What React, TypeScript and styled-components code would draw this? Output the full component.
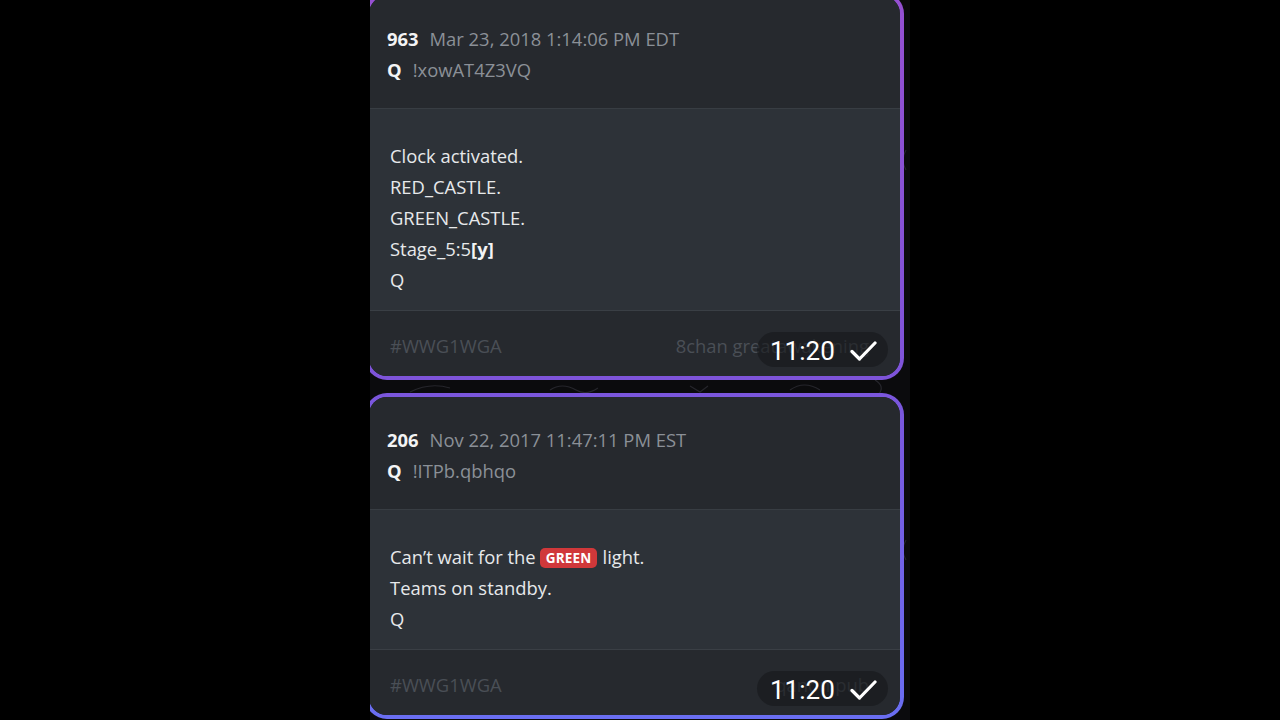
import React from "react";
import styled, { createGlobalStyle } from "styled-components";

const Global = createGlobalStyle`
  html, body { margin: 0; padding: 0; background: #000; }
  body { width: 1280px; height: 720px; overflow: hidden; font-family: "Open Sans", "Noto Sans", sans-serif; }
`;

const Stage = styled.div`
  display: flex;
  width: 1280px;
  height: 720px;
  padding-left: 370px;
  box-sizing: border-box;
  background: #000;
`;

const Column = styled.div`
  position: relative;
  width: 540px;
  height: 720px;
  overflow: hidden;
  background: #0b0b0d;
  display: flex;
  flex-direction: column;
  gap: 13px;
`;

const Doodles = styled.svg`
  position: absolute;
  inset: 0;
  pointer-events: none;
`;

const CardFrame = styled.div<{ $from: string; $to: string; $top?: number }>`
  position: relative;
  margin-left: -5px;
  margin-top: ${(p) => p.$top ?? 0}px;
  width: 539px;
  padding: 4px;
  box-sizing: border-box;
  border-radius: 22px;
  background: linear-gradient(180deg, ${(p) => p.$from}, ${(p) => p.$to});
  flex-shrink: 0;
`;

const CardInner = styled.div`
  position: relative;
  border-radius: 18px;
  overflow: hidden;
  background: #26292e;
`;

const Header = styled.div`
  height: 113px;
  box-sizing: border-box;
  padding: 27px 0 0 18px;
  border-bottom: 1px solid #383d43;
  background: #26292e;
`;

const HeadLine = styled.div`
  display: flex;
  align-items: baseline;
  gap: 11px;
  font-size: 18.4px;
  line-height: 31px;
`;

const Strong = styled.span`
  font-weight: 700;
  color: #f3f4f5;
`;

const Muted = styled.span`
  color: #8b9097;
`;

const Body = styled.div`
  padding: 31px 21px 15px 21px;
  background: #2d3238;
  border-bottom: 1px solid #3a3f45;
`;

const Line = styled.div`
  font-size: 18.4px;
  line-height: 31px;
  height: 31px;
  color: #e7e9eb;
  white-space: nowrap;
`;

const Bold = styled.b`
  font-weight: 700;
  color: #f3f4f5;
`;

const Tag = styled.span`
  display: inline-block;
  background: #d0383a;
  color: #fff;
  font-weight: 700;
  font-size: 13.5px;
  line-height: 20px;
  padding: 0 6px;
  border-radius: 5px;
  margin: 0 5px 0 4px;
  vertical-align: 1px;
  letter-spacing: 0.2px;
`;

const Footer = styled.div`
  height: 65px;
  box-sizing: border-box;
  padding: 23px 31px 0 21px;
  display: flex;
  justify-content: space-between;
  font-size: 18.4px;
  line-height: 24px;
  color: #4a4f56;
  background: #26292e;
  white-space: nowrap;
`;

const TimeBadge = styled.div`
  position: absolute;
  right: 12px;
  bottom: 9px;
  height: 35px;
  width: 131px;
  box-sizing: border-box;
  padding: 3px 11px 0 13px;
  border-radius: 18px;
  background: rgba(22, 24, 27, 0.62);
  display: flex;
  align-items: center;
  justify-content: space-between;
  font-family: Roboto, "Noto Sans", sans-serif;
  font-size: 26px;
  line-height: 32px;
  color: #fff;
`;

const Check = () => (
  <svg width="27" height="22" viewBox="0 0 27 22">
    <polyline points="2,11.5 9.5,19 25,3" fill="none" stroke="#fff" strokeWidth="3.2" strokeLinecap="round" strokeLinejoin="round" />
  </svg>
);

type Post = {
  num: string;
  date: string;
  trip: string;
  lines: React.ReactNode[];
  tag: string;
  source: string;
  from: string;
  to: string;
  top?: number;
};

const posts: Post[] = [
  {
    num: "963",
    date: "Mar 23, 2018 1:14:06 PM EDT",
    trip: "!xowAT4Z3VQ",
    lines: [
      "Clock activated.",
      "RED_CASTLE.",
      "GREEN_CASTLE.",
      <>Stage_5:5<Bold>[y]</Bold></>,
      "Q",
    ],
    tag: "#WWG1WGA",
    source: "8chan greatawakening",
    from: "#9650d2",
    to: "#7e54da",
    top: -8,
  },
  {
    num: "206",
    date: "Nov 22, 2017 11:47:11 PM EST",
    trip: "!ITPb.qbhqo",
    lines: [
      <>Can’t wait for the<Tag>GREEN</Tag>light.</>,
      "Teams on standby.",
      "Q",
    ],
    tag: "#WWG1WGA",
    source: "qanon.pub",
    from: "#7b56dc",
    to: "#6a6ef2",
  },
];

export default function App() {
  return (
    <>
      <Global />
      <Stage>
        <Column>
          <Doodles width="540" height="720">
            <g fill="none" stroke="#26262c" strokeWidth="1.2">
              <path d="M40 392 q20 -10 40 -4" />
              <path d="M180 390 q12 -8 26 0 q10 6 22 -2" />
              <path d="M320 386 l10 6 l8 -6" />
              <path d="M420 390 q14 -10 30 0" />
              <path d="M505 380 q10 6 4 14" />
              <path d="M536 150 q-6 10 0 20" />
              <path d="M536 540 q-6 10 0 20" />
            </g>
          </Doodles>
          {posts.map((p) => (
            <CardFrame key={p.num} $from={p.from} $to={p.to} $top={p.top}>
              <CardInner>
                <Header>
                  <HeadLine>
                    <Strong>{p.num}</Strong>
                    <Muted>{p.date}</Muted>
                  </HeadLine>
                  <HeadLine>
                    <Strong>Q</Strong>
                    <Muted>{p.trip}</Muted>
                  </HeadLine>
                </Header>
                <Body>
                  {p.lines.map((l, i) => (
                    <Line key={i}>{l}</Line>
                  ))}
                </Body>
                <Footer>
                  <span>{p.tag}</span>
                  <span>{p.source}</span>
                </Footer>
                <TimeBadge>
                  <span>11:20</span>
                  <Check />
                </TimeBadge>
              </CardInner>
            </CardFrame>
          ))}
        </Column>
      </Stage>
    </>
  );
}
